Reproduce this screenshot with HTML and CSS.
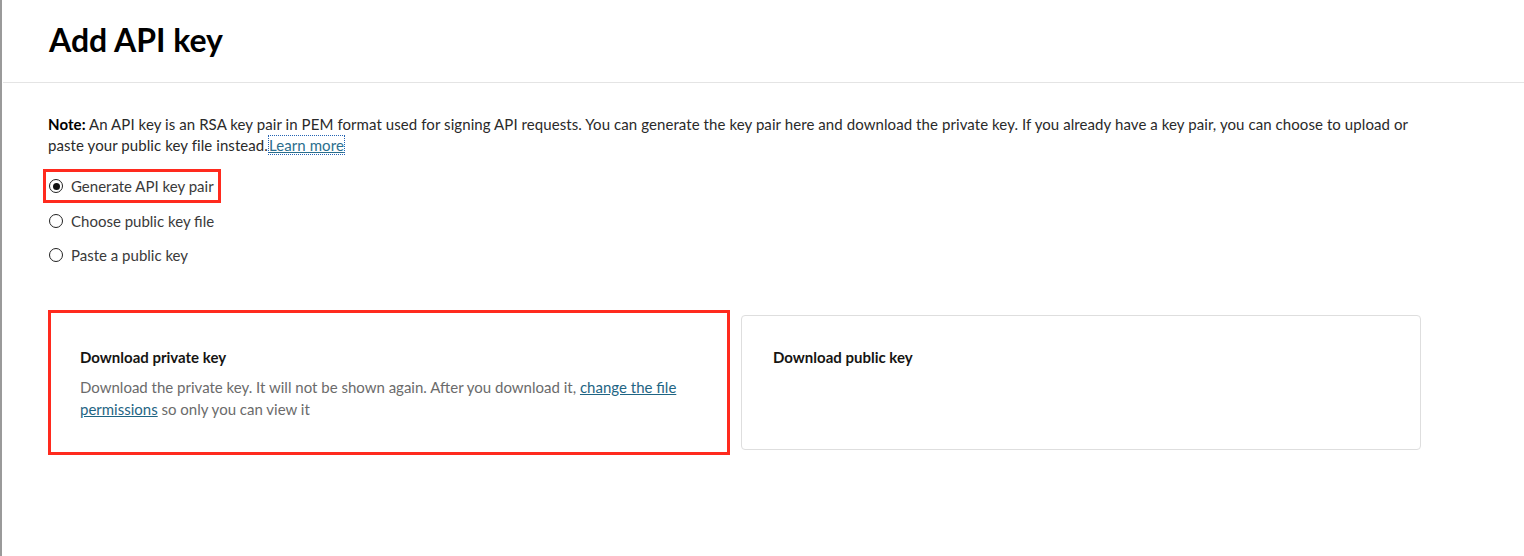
FILE: index.html
```html
<!DOCTYPE html>
<html>
<head>
<meta charset="utf-8">
<link rel="stylesheet" href="styles.css">
</head>
<body>
<div class="panel">
  <header class="header">
    <h1 class="title">Add API key</h1>
  </header>
  <div class="content">
    <p class="note"><b>Note:</b> An API key is an RSA key pair in PEM format used for signing API requests. You can generate the key pair here and download the private key. If you already have a key pair, you can choose to upload or paste your public key file instead.<a class="learn" href="#">Learn more</a></p>
    <div class="radios">
      <label class="radio radio-hl"><span class="dot checked"></span><span>Generate API key pair</span></label>
      <label class="radio"><span class="dot"></span><span>Choose public key file</span></label>
      <label class="radio"><span class="dot"></span><span>Paste a public key</span></label>
    </div>
    <div class="cards">
      <div class="card card-hl">
        <h2 class="card-title">Download private key</h2>
        <p class="card-desc">Download the private key. It will not be shown again. After you download it, <a href="#" class="link">change the file permissions</a> so only you can view it</p>
      </div>
      <div class="card">
        <h2 class="card-title">Download public key</h2>
      </div>
    </div>
  </div>
</div>
</body>
</html>
```
FILE: styles.css
```css
html, body {
  margin: 0;
  padding: 0;
  background: #fff;
}
body {
  font-family: "Lato", "Open Sans", sans-serif;
  color: #161513;
}
.panel {
  border-left: 2px solid #9a9a9a;
  min-height: 556px;
  box-sizing: border-box;
}
.header {
  height: 83px;
  border-bottom: 1px solid #e4e4e4;
  margin-left: 1px;
  box-sizing: border-box;
  padding: 20px 0 0 46px;
}
.title {
  margin: 0;
  font-size: 32px;
  line-height: 40px;
  font-weight: 700;
  color: #000;
  letter-spacing: 0;
}
.content {
  padding: 31px 0 0 46px;
}
.note {
  margin: 0;
  font-size: 15px;
  line-height: 21px;
  font-weight: 400;
  color: #2a2a2a;
  max-width: 1370px;
  letter-spacing: 0.08px;
}
.note b {
  font-weight: 700;
  color: #000;
}
.learn {
  color: #2a6e8e;
  text-decoration: underline;
  outline: 1px dotted #2463b3;
  outline-offset: 0;
  margin-left: 1px;
}
.radios {
  display: flex;
  flex-direction: column;
  align-items: flex-start;
  margin-top: 18px;
  gap: 10.5px;
}
.radio {
  display: flex;
  align-items: center;
  gap: 8px;
  font-size: 15px;
  line-height: 24px;
  color: #3a3a3a;
  padding: 0 0 0 1px;
  height: 24px;
}
.radio-hl {
  outline: 3px solid #ff2a1e;
  outline-offset: 2px;
  padding-right: 2px;
}
.dot {
  width: 14px;
  height: 14px;
  box-sizing: border-box;
  border: 1.5px solid #222;
  border-radius: 50%;
  display: flex;
  align-items: center;
  justify-content: center;
}
.dot.checked::after {
  content: "";
  width: 7px;
  height: 7px;
  border-radius: 50%;
  background: #111;
}
.cards {
  display: flex;
  align-items: center;
  gap: 11px;
  margin-top: 43px;
  width: 1373px;
}
.card {
  flex: 0 0 680px;
  height: 135px;
  box-sizing: border-box;
  border: 1px solid #dedede;
  border-radius: 4px;
  padding: 30px 31px;
}
.card-hl {
  flex: 0 0 682px;
  height: 145px;
  border: 3px solid #ff2a1e;
  border-radius: 0;
  padding: 33px 29px;
}
.card-title {
  margin: 0;
  font-size: 15px;
  line-height: 22px;
  font-weight: 700;
  color: #161513;
}
.card-desc {
  margin: 8px 0 0;
  font-size: 15px;
  line-height: 22px;
  color: #6b6b6b;
  font-weight: 400;
  padding-right: 6px;
}
.link {
  color: #1f6584;
  text-decoration: underline;
}
```
